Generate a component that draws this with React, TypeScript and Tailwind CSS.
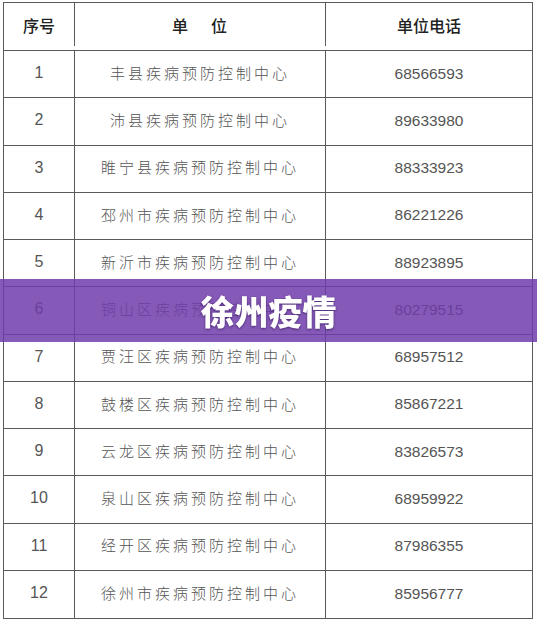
const rows = [
  { no: "1", name: "丰县疾病预防控制中心", tel: "68566593" },
  { no: "2", name: "沛县疾病预防控制中心", tel: "89633980" },
  { no: "3", name: "睢宁县疾病预防控制中心", tel: "88333923" },
  { no: "4", name: "邳州市疾病预防控制中心", tel: "86221226" },
  { no: "5", name: "新沂市疾病预防控制中心", tel: "88923895" },
  { no: "6", name: "铜山区疾病预防控制中心", tel: "80279515" },
  { no: "7", name: "贾汪区疾病预防控制中心", tel: "68957512" },
  { no: "8", name: "鼓楼区疾病预防控制中心", tel: "85867221" },
  { no: "9", name: "云龙区疾病预防控制中心", tel: "83826573" },
  { no: "10", name: "泉山区疾病预防控制中心", tel: "68959922" },
  { no: "11", name: "经开区疾病预防控制中心", tel: "87986355" },
  { no: "12", name: "徐州市疾病预防控制中心", tel: "85956777" },
];

const cjk = "font-['Noto_Sans_CJK_SC',sans-serif]";
const num = "font-['Liberation_Sans','Noto_Sans_CJK_SC',sans-serif]";

export default function App() {
  return (
    <div className="relative w-[537px] h-[621px] bg-white overflow-hidden">
      <div className="pl-[3px] pt-[2px]">
        <div className="w-[530px] border-[1.5px] border-[#5a5a5a] flex flex-col">
          {/* header */}
          <div className={`flex h-[48px] pb-[4px] border-b border-[#5a5a5a] text-[16px] text-[#222] font-medium ${cjk}`}>
            <div className="w-[71px] border-r border-[#5a5a5a] flex items-center justify-center">序号</div>
            <div className="w-[251px] border-r border-[#5a5a5a] flex items-center justify-center tracking-[1px]">
              单<span className="inline-block w-[22px]" />位
            </div>
            <div className="flex-1 flex items-center justify-center">单位电话</div>
          </div>
          {rows.map((r, i) => (
            <div
              key={r.no}
              className={`flex h-[47.25px] text-[#555] ${i < rows.length - 1 ? "border-b border-[#5a5a5a]" : ""}`}
            >
              <div className={`w-[71px] border-r border-[#5a5a5a] flex items-center justify-center pb-[2px] text-[16px] ${num}`}>
                {r.no}
              </div>
              <div className={`w-[251px] border-r border-[#5a5a5a] flex items-center justify-center pb-[2px] text-[15px] tracking-[3px] font-light ${cjk}`}>
                {r.name}
              </div>
              <div className={`flex-1 flex items-center justify-center pb-[2px] text-[15.5px] ${num}`}>{r.tel}</div>
            </div>
          ))}
        </div>
      </div>

      {/* title band */}
      <div className="absolute left-0 right-0 top-[279px] h-[63px] bg-[#6e3caa]/85 flex items-center justify-center">
        <span className={`text-white text-[34px] font-black drop-shadow-[0_1px_1px_rgba(40,10,70,0.6)] ${cjk}`}>
          徐州疫情
        </span>
      </div>
    </div>
  );
}
